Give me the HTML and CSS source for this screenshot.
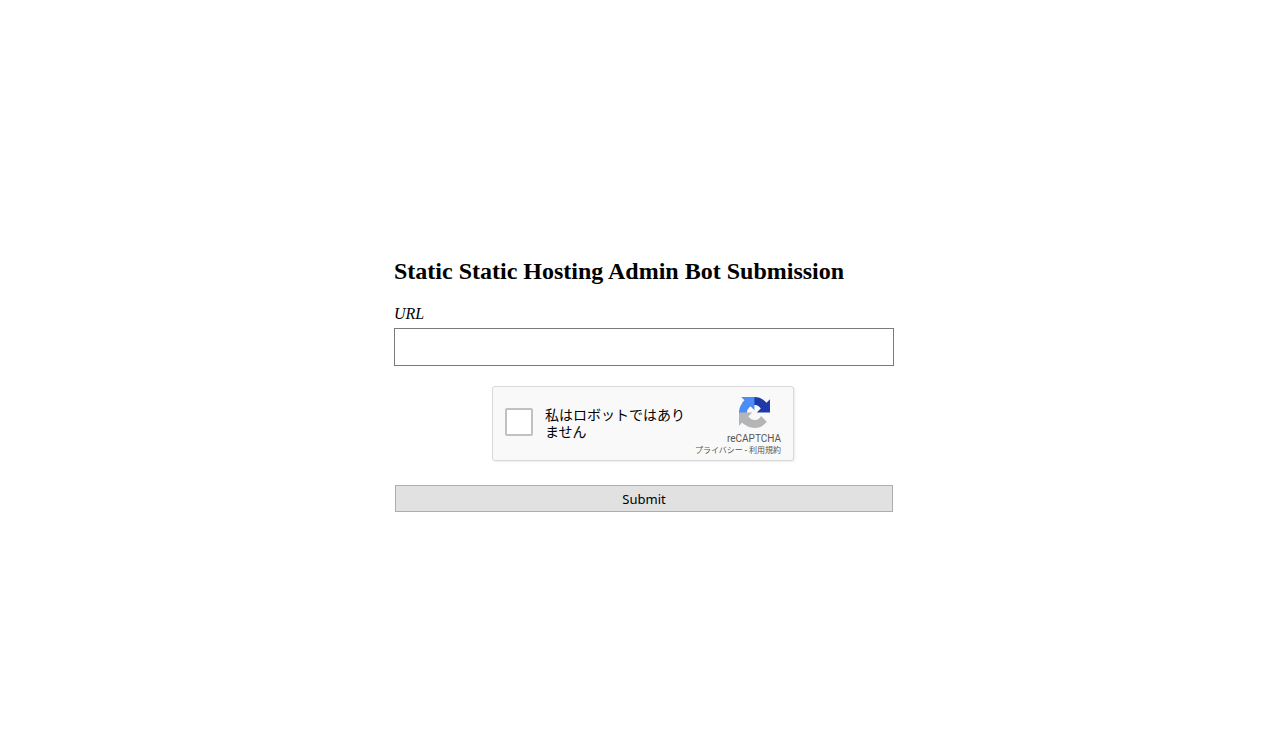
FILE: index.html
```html
<!DOCTYPE html>
<html lang="en">
<head>
<meta charset="utf-8">
<meta name="viewport" content="width=device-width, initial-scale=1">
<title>Static Static Hosting Admin Bot Submission</title>
<link rel="stylesheet" href="styles.css">
</head>
<body>
<main class="page">
  <form class="form">
    <h2 class="title">Static Static Hosting Admin Bot Submission</h2>
    <label class="label" for="url">URL</label>
    <input class="url" id="url" name="url" type="text">
    <div class="captcha" lang="ja">
      <input class="check" id="robot" type="checkbox">
      <label class="captcha-label" for="robot">私はロボットではありません</label>
      <div class="brand">
        <svg class="logo" viewBox="0 0 64 64" aria-hidden="true">
          <path fill="#1c3aa9" d="M64 31.955l-.033-1.37V4.687l-7.16 7.16C50.948 4.674 42.033.093 32.05.093c-10.4 0-19.622 4.96-25.458 12.64l11.736 11.86a15.55 15.55 0 0 1 4.754-5.334c2.05-1.6 4.952-2.906 8.968-2.906.485 0 .86.057 1.135.163 4.976.393 9.288 3.14 11.828 7.124l-8.307 8.307L64 31.953"/>
          <path fill="#4a8df6" d="M31.862.094l-1.37.033H4.594l7.16 7.16C4.58 13.147 0 22.06 0 32.046c0 10.4 4.96 19.622 12.64 25.458L24.5 45.768a15.55 15.55 0 0 1-5.334-4.754c-1.6-2.05-2.906-4.952-2.906-8.968 0-.485.057-.86.163-1.135.393-4.976 3.14-9.288 7.124-11.828l8.307 8.307L31.86.095"/>
          <path fill="#b5b5b5" d="M.001 32.045l.033 1.37v25.898l7.16-7.16c5.86 7.173 14.774 11.754 24.76 11.754 10.4 0 19.622-4.96 25.458-12.64l-11.736-11.86a15.55 15.55 0 0 1-4.754 5.334c-2.05 1.6-4.952 2.906-8.968 2.906-.485 0-.86-.057-1.135-.163-4.976-.393-9.288-3.14-11.828-7.124l8.307-8.307c-10.522.04-22.4.066-27.295-.005"/>
        </svg>
        <div class="brand-name">reCAPTCHA</div>
        <div class="legal"><a class="legal-link" href="#privacy">プライバシー</a> - <a class="legal-link" href="#terms">利用規約</a></div>
      </div>
    </div>
    <button class="submit" type="submit">Submit</button>
  </form>
</main>
</body>
</html>
```
FILE: styles.css
```css
*, *::before, *::after {
  box-sizing: border-box;
}

body {
  margin: 0;
  background: #fff;
  color: #000;
  font-family: "Liberation Serif", "Times New Roman", serif;
  font-size: 16px;
}

.page {
  display: flex;
  min-height: 100vh;
  align-items: center;
  justify-content: center;
}

.form {
  display: flex;
  flex-direction: column;
  width: 100%;
  max-width: 500px;
}

.title {
  margin: 20px 0;
  font-size: 24px;
  line-height: 27px;
}

.label {
  margin-bottom: 5px;
  font-style: italic;
  line-height: 18px;
}

.url {
  width: 100%;
  height: 38px;
  margin: 0;
  padding: 8px;
  border: 1px solid #7a7a7a;
  border-radius: 0;
  background: #fff;
  font-size: 16px;
}

.captcha {
  display: flex;
  align-self: center;
  width: 302px;
  max-width: 100%;
  min-height: 75px;
  margin: 20px 2px 24px 0;
  padding: 0 12px;
  border: 1px solid #d9d9d9;
  border-radius: 3px;
  background: #f9f9f9;
  box-shadow: 1px 1px 2px rgba(0, 0, 0, 0.08);
  font-family: Roboto, "Noto Sans CJK JP", sans-serif;
}

.check {
  flex: none;
  width: 28px;
  height: 28px;
  margin: 21px 12px 0 0;
  border: 2px solid #c1c1c1;
  border-radius: 2px;
  background: #fff;
  appearance: none;
}

.check:checked {
  background: #4285f4;
}

.captcha-label {
  align-self: center;
  width: 150px;
  padding-bottom: 2px;
  font-family: "Noto Sans CJK JP", sans-serif;
  font-size: 14px;
  line-height: 17px;
}

.brand {
  display: flex;
  flex: 1;
  flex-direction: column;
  align-items: flex-end;
  padding-top: 10px;
  color: #555;
  white-space: nowrap;
}

.logo {
  width: 31px;
  height: 31px;
  margin-right: 11px;
}

.brand-name {
  margin-top: 5px;
  font-size: 10px;
  line-height: 12px;
}

.legal {
  color: #000;
  font-size: 8px;
  line-height: 12px;
}

.legal-link {
  color: #555;
  text-decoration: none;
}

.submit {
  height: 27px;
  margin: 0 1px;
  padding: 0;
  border: 1px solid #adadad;
  border-radius: 0;
  background: #e1e1e1;
  color: #000;
  font-family: "Noto Sans", sans-serif;
  font-size: 13px;
}
```
